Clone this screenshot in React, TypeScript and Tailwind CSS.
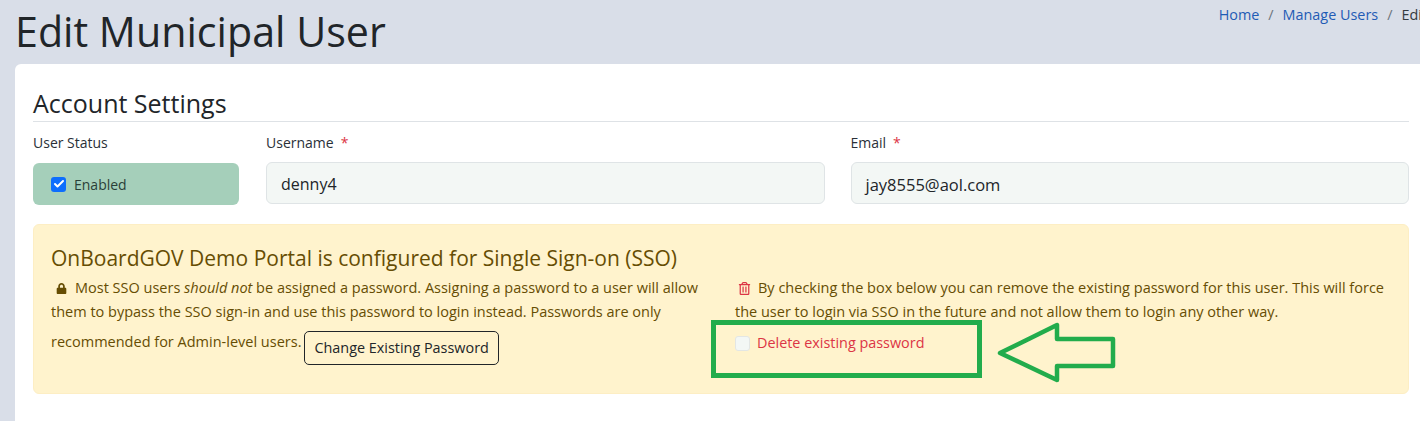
import { Check } from 'lucide-react'
import { FaLock, FaRegTrashAlt } from 'react-icons/fa'

function FieldLabel({ text, required }: { text: string; required?: boolean }) {
  return (
    <div className="h-[24px] text-[14px] leading-[24px] text-[#2a3038]">
      {text}
      {required && <span className="ml-[7px] text-[#dc3545]">*</span>}
    </div>
  )
}

function TextField({ label, value, valueClass }: { label: string; value: string; valueClass: string }) {
  return (
    <div className="flex-1">
      <FieldLabel text={label} required />
      <div className={`mt-[7px] h-[42px] rounded-[6px] border border-[#dfe4e6] bg-[#f3f7f5] pl-[14px] leading-[43px] text-[#212529] ${valueClass}`}>
        {value}
      </div>
    </div>
  )
}

export default function App() {
  return (
    <div className="relative h-screen w-full overflow-hidden bg-[#d9dee8] font-['Open_Sans','Liberation_Sans',sans-serif]">
      <header className="flex h-[64px] items-start pl-[15px]">
        <h1 className="whitespace-nowrap text-[41.2px] leading-[62px] text-[#212529]">Edit Municipal User</h1>
        <nav className="ml-auto mr-[-111px] flex shrink-0 gap-[9px] whitespace-nowrap pt-[5px] text-[14.4px] leading-[20px]">
          <a className="text-[#1f5bb5]">Home</a>
          <span className="text-[#6c757d]">/</span>
          <a className="text-[#1f5bb5]">Manage Users</a>
          <span className="text-[#6c757d]">/</span>
          <span className="text-[#343a40]">Edit Municipal User</span>
        </nav>
      </header>

      <main className="ml-[15px] h-[357px] rounded-tl-[6px] bg-white pl-[18px] pr-[11px] pt-[24px]">
        <h2 className="h-[34px] border-b border-[#dee2e6] text-[25px] leading-[30px] text-[#212529]">Account Settings</h2>

        <div className="mt-[9px] flex gap-[26px]">
          <div className="w-[207px] shrink-0">
            <FieldLabel text="User Status" />
            <div className="mt-[8px] flex h-[42px] w-[206px] items-center rounded-[6px] bg-[#a5cfba] pl-[18px] text-[14px] text-[#2a3f38]">
              <span className="flex h-[15px] w-[15px] items-center justify-center rounded-[3px] bg-[#0d6efd]">
                <Check size={12} strokeWidth={4} className="text-white" />
              </span>
              <span className="ml-[8px]">Enabled</span>
            </div>
          </div>
          <TextField label="Username" value="denny4" valueClass="text-[16px]" />
          <TextField label="Email" value="jay8555@aol.com" valueClass="text-[16.5px]" />
        </div>

        <section className="mt-[19px] h-[170px] rounded-[6px] border border-[#fdeec4] bg-[#fff3cd] pl-[17px] pr-[20px] pt-[18px] text-[#664d03]">
          <h3 className="text-[21px] leading-[30px] text-[#664d03]">OnBoardGOV Demo Portal is configured for Single Sign-on (SSO)</h3>
          <div className="mt-[3px] flex text-[14.5px] leading-[24px]">
            <div className="w-[684px] shrink-0 pr-[20px]">
              <p>
                <FaLock size={11} className="mb-[2px] ml-[5px] mr-[8px] inline-block" />
                Most SSO users <em>should not</em> be assigned a password. Assigning a password to a user will allow them to bypass the SSO sign-in and use this password to login instead. Passwords are only recommended for Admin-level users.
                <button className="ml-[3px] mt-[7px] h-[34px] rounded-[5px] border border-[#212529] px-[9px] align-[-6px] text-[14.4px] leading-[30px] text-[#212529]">
                  Change Existing Password
                </button>
              </p>
            </div>
            <div className="flex-1">
              <p>
                <FaRegTrashAlt size={13} className="mb-[2px] ml-[3px] mr-[7px] inline-block text-[#dc3545]" />
                By checking the box below you can remove the existing password for this user. This will force the user to login via SSO in the future and not allow them to login any other way.
              </p>
              <label className="mt-[7px] flex items-center text-[#dc3545]">
                <span className="h-[15px] w-[15px] rounded-[3px] border border-[#e3e6e4] bg-[#f3f7f5]" />
                <span className="ml-[7px] text-[14.4px]">Delete existing password</span>
              </label>
            </div>
          </div>
        </section>
      </main>

      {/* annotation drawn over the screenshot */}
      <div className="absolute left-[711px] top-[320px] h-[58px] w-[271px] border-[5px] border-[#22ac4c]" />
      <svg className="absolute left-[990px] top-[315px]" width="135" height="75" viewBox="0 0 135 75" fill="none">
        <path d="M10 38 L67 10 L67 24 L123 24 L123 51 L67 51 L67 65 Z" stroke="#22ac4c" strokeWidth="4.5" strokeLinejoin="round" />
      </svg>
    </div>
  )
}
